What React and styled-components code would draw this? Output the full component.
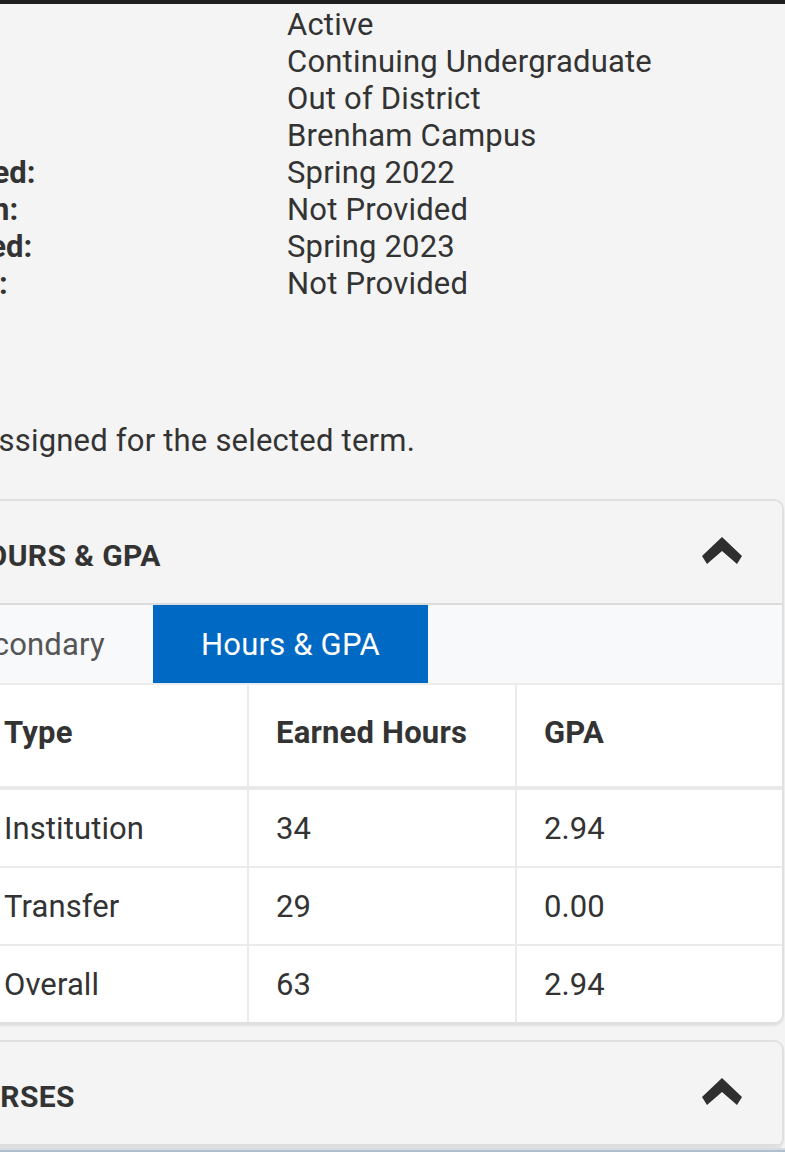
import React from "react";
import styled, { createGlobalStyle } from "styled-components";

const GlobalStyle = createGlobalStyle`
  html, body {
    margin: 0;
    padding: 0;
    background: #f4f4f4;
    overflow: hidden;
  }
  body {
    font-family: Roboto, "Liberation Sans", Arial, sans-serif;
    color: #333;
  }
`;

const info = [
  { label: "Status:", value: "Active" },
  { label: "Type:", value: "Continuing Undergraduate" },
  { label: "Residency:", value: "Out of District" },
  { label: "Campus:", value: "Brenham Campus" },
  { label: "First Term Attended:", value: "Spring 2022" },
  { label: "Primary Institution:", value: "Not Provided" },
  { label: "Last Term Attended:", value: "Spring 2023" },
  { label: "Educational Goals:", value: "Not Provided" },
];

const hours = [
  { type: "Institution", earned: "34", gpa: "2.94" },
  { type: "Transfer", earned: "29", gpa: "0.00" },
  { type: "Overall", earned: "63", gpa: "2.94" },
];

function Chevron() {
  return (
    <ChevronSvg viewBox="0 0 40 27" width="40" height="27">
      <polygon points="20,0 40,19 35,27 20,14 5,27 0,19" fill="#2f2f2f" />
    </ChevronSvg>
  );
}

export default function App() {
  return (
    <>
      <GlobalStyle />
      <TopBar />
      <Page>
        <InfoList>
          {info.map((row) => (
            <React.Fragment key={row.label}>
              <Label>{row.label}</Label>
              <Value>{row.value}</Value>
            </React.Fragment>
          ))}
        </InfoList>

        <Message>No advisor assigned for the selected term.</Message>

        <Panel>
          <PanelHeader indent={263}>
            <Title>HOURS &amp; GPA</Title>
            <Chevron />
          </PanelHeader>
          <TabBar>
            <Tab>Primary</Tab>
            <Tab>Secondary</Tab>
            <Tab active>Hours &amp; GPA</Tab>
          </TabBar>
          <Table>
            <HeadRow>
              <HeadCell>Type</HeadCell>
              <HeadCell>Earned Hours</HeadCell>
              <HeadCell last>GPA</HeadCell>
            </HeadRow>
            {hours.map((h, i) => (
              <Row key={h.type} last={i === hours.length - 1}>
                <Cell>{h.type}</Cell>
                <Cell>{h.earned}</Cell>
                <Cell last>{h.gpa}</Cell>
              </Row>
            ))}
          </Table>
        </Panel>

        <Panel collapsed>
          <PanelHeader indent={237}>
            <Title>COURSES</Title>
            <Chevron />
          </PanelHeader>
        </Panel>
      </Page>
      <BottomBar />
    </>
  );
}

const TopBar = styled.div`
  height: 4px;
  background: #1f1f1f;
`;

const Page = styled.div`
  margin-left: -300px;
  margin-right: 1px;
`;

const InfoList = styled.div`
  display: grid;
  grid-template-columns: 587px 1fr;
  padding-top: 2px;
  font-size: 31px;
  letter-spacing: 0.2px;
  line-height: 37px;
  white-space: nowrap;
`;

const Label = styled.div`
  font-weight: 700;
  padding-left: 49px;
  color: #333;
  letter-spacing: 0;
`;

const Value = styled.div`
  color: #333;
`;

const Message = styled.p`
  margin: 120px 0 0;
  padding-left: 123px;
  font-size: 31px;
  letter-spacing: 0.2px;
  line-height: 37px;
  color: #333;
  white-space: nowrap;
`;

const Panel = styled.section`
  margin-top: ${(p) => (p.collapsed ? "16px" : "40px")};
  border: 2px solid #e0e0e0;
  border-radius: 10px;
  background: #f4f4f4;
  box-shadow: 0 2px 2px rgba(0, 0, 0, 0.08);
  overflow: hidden;
`;

const PanelHeader = styled.div`
  height: 102px;
  display: flex;
  align-items: center;
  justify-content: space-between;
  padding: 0 40px 0 ${(p) => p.indent}px;
  border-bottom: 2px solid #dcdcdc;
  background: #f4f4f4;
`;

const Title = styled.h2`
  margin: 6px 0 0;
  font-size: 30px;
  font-weight: 700;
  color: #333;
  letter-spacing: 0.4px;
`;

const ChevronSvg = styled.svg`
  display: block;
  margin-top: -4px;
`;

const TabBar = styled.div`
  display: flex;
  height: 78px;
  padding-left: 3px;
  background: #f8f9fa;
  border-bottom: 2px solid #ececec;
`;

const Tab = styled.div`
  display: flex;
  align-items: center;
  padding: 0 48px;
  font-size: 31px;
  letter-spacing: 0.2px;
  color: ${(p) => (p.active ? "#fff" : "#555")};
  background: ${(p) => (p.active ? "#0069c3" : "transparent")};
`;

const Table = styled.div`
  margin-left: 275px;
  background: #fff;
`;

const HeadRow = styled.div`
  display: grid;
  grid-template-columns: 272px 268px 1fr;
  height: 101px;
  border-bottom: 4px solid #e9e9e9;
`;

const Row = styled.div`
  display: grid;
  grid-template-columns: 272px 268px 1fr;
  height: 76px;
  border-bottom: ${(p) => (p.last ? "none" : "2px solid #ebebeb")};
`;

const Cell = styled.div`
  display: flex;
  align-items: center;
  padding: 0 27px;
  font-size: 31px;
  letter-spacing: 0.1px;
  color: #333;
  border-right: ${(p) => (p.last ? "none" : "2px solid #ebebeb")};
`;

const HeadCell = styled(Cell)`
  font-weight: 700;
  font-size: 31px;
  letter-spacing: 0.2px;
  padding-bottom: 6px;
`;

const BottomBar = styled.div`
  height: 8px;
  background: #b1bdcc;
  border-top: 2px solid #d8dde3;
`;
